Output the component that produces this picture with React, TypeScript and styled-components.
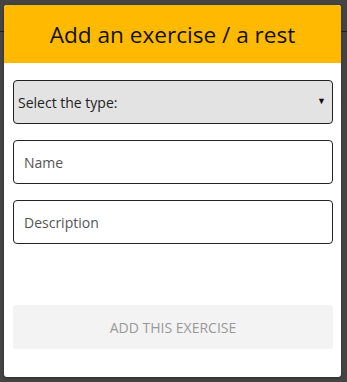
import React from 'react';
import styled, { createGlobalStyle } from 'styled-components';

const yellow = '#FFBA00';

const GlobalStyle = createGlobalStyle`
  html, body {
    margin: 0;
    padding: 0;
    background: #444444;
    font-family: 'Open Sans', 'Liberation Sans', sans-serif;
  }
`;

const Page = styled.div`
  position: relative;
  width: 347px;
  height: 382px;
  overflow: hidden;
  background: #444444;
`;

// faint page behind the backdrop
const PageRule = styled.div`
  height: 31px;
  border-bottom: 1px solid #1e1e1e;
`;

const Modal = styled.div`
  position: absolute;
  left: 4px;
  top: 5px;
  width: 337px;
  height: 372px;
  background: #ffffff;
  border-radius: 3px;
  overflow: hidden;
  box-shadow: 0 1px 3px rgba(0, 0, 0, 0.4);
  display: flex;
  flex-direction: column;
`;

const Header = styled.div`
  height: 58px;
  background: ${yellow};
  display: flex;
  align-items: center;
  justify-content: center;
`;

const Title = styled.h1`
  margin: 0;
  font-size: 22.6px;
  font-weight: 400;
  color: #111;
`;

const Body = styled.div`
  padding: 17px 8px 0 9px;
  display: flex;
  flex-direction: column;
  gap: 16px;
`;

const Select = styled.div`
  height: 42px;
  border: 1px solid #222;
  border-radius: 4px;
  background: #e3e3e3;
  display: flex;
  align-items: center;
  justify-content: space-between;
  padding: 0 6px 0 4px;
  font-size: 14px;
  color: #222;
`;

const Caret = styled.span`
  font-size: 9px;
  color: #111;
  margin-bottom: 3px;
`;

const Field = styled.div`
  height: 42px;
  border: 1px solid #222;
  border-radius: 4px;
  display: flex;
  align-items: center;
  padding: 0 10px;
  font-size: 14px;
  color: #555;
`;

const Button = styled.div`
  margin: 61px 8px 0 9px;
  height: 44px;
  border-radius: 3px;
  background: #f3f3f3;
  display: flex;
  align-items: center;
  justify-content: center;
  font-size: 14px;
  color: #999;
  text-transform: uppercase;
`;

const App: React.FC = () => {
  return (
    <Page>
      <GlobalStyle />
      <PageRule />
      <Modal>
        <Header>
          <Title>Add an exercise / a rest</Title>
        </Header>
        <Body>
          <Select>
            <span>Select the type:</span>
            <Caret>▼</Caret>
          </Select>
          <Field>Name</Field>
          <Field>Description</Field>
        </Body>
        <Button>Add this exercise</Button>
      </Modal>
    </Page>
  );
};

export default App;
